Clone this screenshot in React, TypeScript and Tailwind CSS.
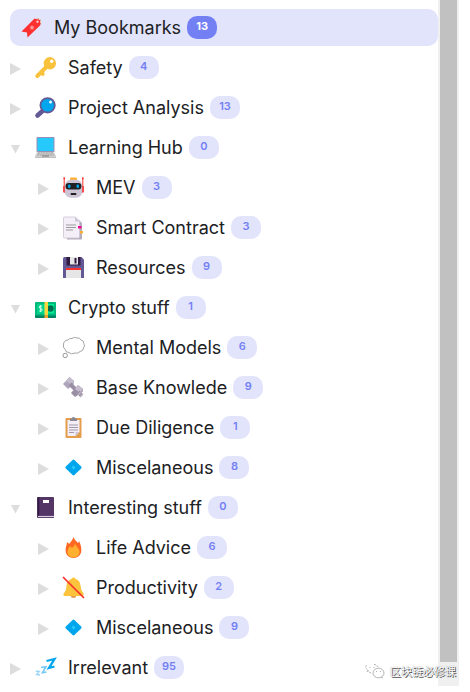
import type { ReactNode } from "react";

type IconName =
  | "bookmark" | "key" | "search" | "laptop" | "robot" | "pages" | "floppy" | "money" | "thought"
  | "bolt" | "clipboard" | "diamond" | "notebook" | "fire" | "bell" | "zzz";

const drawings: Record<IconName, ReactNode> = {
  bookmark: (
    <>
      <path d="M17 1l1 3M20 3l-3 1.500M18 5l2 2" stroke="#d99a55" strokeWidth="1" fill="none" />
      <path d="M13.500 1.500l5.500 1.500.500 5L6.500 20.500l-.500-5-5.500-1z" fill="#ff3030" />
      <circle cx="16.500" cy="4.800" r="1.200" fill="#ffc6c6" />
      <path d="M11 8l.800 1.600 1.700.200-1.200 1.200.200 1.700-1.500-.800-1.500.800.200-1.700-1.200-1.200 1.700-.200z" fill="#ff9b9b" />
    </>
  ),
  key: (
    <>
      <path d="M2.300 19l9.500-9.500M5.500 15.800l2.200 1" stroke="#f9c23c" strokeWidth="4" strokeLinecap="round" />
      <circle cx="14.800" cy="6.300" r="6.200" fill="#f9c23c" />
      <circle cx="16.700" cy="4.300" r="1.700" fill="#fff" />
    </>
  ),
  search: (
    <>
      <path d="M2.500 18.500l5-4.500" stroke="#635994" strokeWidth="4.600" strokeLinecap="round" />
      <circle cx="12.600" cy="8.300" r="7.200" fill="#00a6ed" stroke="#635994" strokeWidth="1.800" />
      <circle cx="15.500" cy="5" r="1.500" fill="#e8f7ff" />
    </>
  ),
  laptop: (
    <>
      <rect x="1.500" y="0" width="18" height="15" rx="1" fill="#998eb5" />
      <rect x="2.500" y="1" width="16" height="13" fill="#26c9fc" />
      <path d="M2 15h17l2 4v2H0v-2z" fill="#d3d3d3" />
      <path d="M3 16h15M2 18h17" stroke="#9b9b9b" strokeDasharray="2 .6" />
      <path d="M7 19h7" stroke="#858585" strokeWidth="1.200" />
      <path d="M0 20.500h21" stroke="#bebebe" />
    </>
  ),
  robot: (
    <>
      <path d="M1.200 2v14M19.800 2v14" stroke="#f8312f" strokeWidth="1" />
      <path d="M1.200 9v6M19.800 9v6" stroke="#f8312f" strokeWidth="2" />
      <circle cx="1.200" cy="1.300" r="1" fill="#f8312f" />
      <circle cx="19.800" cy="1.300" r="1" fill="#f8312f" />
      <rect x="7" y="0.500" width="7" height="3" rx="1" fill="#ffb02e" />
      <rect x="1.800" y="2.800" width="17.400" height="18" rx="6" fill="#cdc4d6" />
      <rect x="2.600" y="6" width="15.800" height="6.500" rx="3" fill="#212121" />
      <rect x="5" y="7.500" width="2.500" height="3.500" rx="1" fill="#00a6ed" />
      <rect x="13.500" y="7.500" width="2.500" height="3.500" rx="1" fill="#00a6ed" />
      <rect x="7.500" y="16" width="6" height="2" rx="1" fill="#212121" />
    </>
  ),
  pages: (
    <>
      <path d="M4 3h12l3 3v15.500q0 1-1 1H4z" fill="#b4acbc" />
      <path d="M1.500 0h11l4 4v16q0 1-1 1h-14Q.500 21 .500 20V1q0-1 1-1z" fill="#f3eef8" stroke="#cdc4d6" strokeWidth=".8" />
      <path d="M12 0v4.500h4.500z" fill="#cdc4d6" />
      <path d="M3 8h10M3 10.500h10M3 13h7" stroke="#9b9b9b" />
      <rect x="15" y="9" width="3.500" height="2.500" fill="#f70a8d" />
      <rect x="17" y="14" width="3" height="2.500" fill="#ffb02e" />
    </>
  ),
  floppy: (
    <>
      <path d="M1.500 0h17L21 2.500V21H0V1.500Q0 0 1.500 0z" fill="#635994" />
      <rect x="3.500" y="0" width="14" height="8.500" fill="#321b41" />
      <rect x="7" y="0" width="8" height="7.500" fill="#e6e6e6" />
      <rect x="11.500" y="1" width="2" height="5.500" fill="#321b41" />
      <rect x="3" y="11" width="15" height="10" fill="#e6e6e6" />
      <rect x="3" y="11" width="15" height="2" fill="#f8312f" />
    </>
  ),
  money: (
    <>
      <rect x="0" y="7" width="21" height="14" rx=".8" fill="#008463" />
      <rect x="0" y="5" width="21" height="13.500" rx=".8" fill="#00b87c" />
      <rect x="2" y="7" width="17" height="9.500" fill="#00f092" />
      <circle cx="15.500" cy="11.500" r="3.200" fill="#006d50" />
      <rect x="2" y="7" width="7" height="9.500" fill="#00d28b" />
      <rect x="9.500" y="5" width="3.500" height="13.500" fill="#fcd53f" />
      <rect x="9.500" y="18.500" width="3.500" height="2.500" fill="#ff9d2d" />
      <path d="M7.200 9.200q-3-.8-3 .8t1.500 1.500 1.500 1.500-3 1M5.700 8v7" stroke="#e4fff0" strokeWidth=".9" fill="none" />
    </>
  ),
  thought: (
    <>
      <path d="M5 3q1-2 4-1.500Q11-.500 14 1q3-.500 4 2 3 .500 2.800 3.500Q22.500 9 20.500 11q0 3-3.500 3.500-2 2.500-5 1.500Q8 18 6 15.500q-3.500.200-3.800-3.200Q-.500 10.500.500 8 .300 3.500 5 3z" fill="#fff" stroke="#9b9b9b" strokeWidth=".9" />
      <circle cx="2.200" cy="18.500" r="2.200" fill="#fff" stroke="#8b8b8b" strokeWidth=".9" />
    </>
  ),
  bolt: (
    <>
      <path d="M0 7l6.500-7 4.500 4-.500 3.500L5 12z" fill="#afa6bd" />
      <path d="M3 4l3.500-4 4.500 4-3 3z" fill="#c5bdce" />
      <path d="M7 7l5 5" stroke="#998ea4" strokeWidth="4" />
      <path d="M8 16l7-8 5 4-.500 3-7.500 5z" fill="#998ea4" />
      <path d="M12 12l3-4 5 4-3 4z" fill="#c5bdce" />
      <path d="M15 15l4 4" stroke="#b4acbc" strokeWidth="4" />
      <path d="M14 17l3-3M16 19l3-3" stroke="#87798f" strokeWidth=".7" />
    </>
  ),
  clipboard: (
    <>
      <rect x="2.500" y="1" width="16" height="20" rx="1" fill="#e39d4d" />
      <path d="M4.500 3h12v12l-4 4h-8z" fill="#f3eef8" />
      <path d="M12.500 19v-4h4z" fill="#cdc4d6" />
      <path d="M7 4V2.500q0-1 1.500-1Q8.500 0 10.500 0t2 1.500q1.500 0 1.500 1V4z" fill="#8b8794" />
      <path d="M6 8h9M6 10.500h9M6 13h9M6 15.500h5" stroke="#998ea4" strokeWidth=".9" />
    </>
  ),
  diamond: (
    <>
      <path d="M9.600 3q.9-.9 1.800 0l6.800 6.600q.9.900 0 1.800L11.400 18q-.9.900-1.800 0l-6.800-6.600q-.9-.9 0-1.800z" fill="#00a6ed" />
      <path d="M10.500 8.500l2 2-2 2-2-2z" fill="#26c9fc" />
    </>
  ),
  notebook: (
    <>
      <path d="M3 0h15q1 0 1 1v20H3q-1 0-1-1V1q0-1 1-1z" fill="#533566" />
      <path d="M3.500 0v19" stroke="#321b41" strokeWidth="1.500" />
      <path d="M3 19.500h16" stroke="#d8d0e0" strokeWidth="1.200" />
      <rect x="8" y="3" width="6" height="3" fill="#fff" />
    </>
  ),
  fire: (
    <>
      <path d="M10.500 0c1 3 3 4 4.500 6 .8-.8 1-1.600 1-2 2 4 2.500 7 2.300 10-.3 4-3.500 7-7.800 7s-7.800-3-7.900-7.500C2.500 10 4 8 4 5c1 .5 1.600 1.200 2 2C7.500 5 9.800 3 10.500 0z" fill="#ff6723" />
      <path d="M12 6c0 3 4.500 5 4.500 9 0 3-2.400 5.300-6 5.300s-6-2.300-6-5.300c0-3 1.500-4 2.500-6l2 2c2-1.500 2.500-3 3-5z" fill="#ffb02e" />
    </>
  ),
  bell: (
    <>
      <ellipse cx="10.500" cy="19" rx="2.700" ry="2" fill="#e39d4d" />
      <path d="M8.500 2q0-1.500 2-1.500t2 1.500q4.500 1 5 6.500.300 5 3 8 .700 2.500-1 2.500h-18q-1.500 0-1-2.500 3-3 3-8 .500-5.500 5-6.500z" fill="#fcc33c" />
      <path d="M.500.500l20 20" stroke="#f8312f" strokeWidth="1.700" strokeLinecap="round" />
    </>
  ),
  zzz: (
    <g fill="none">
      <path d="M11.500 4l8-2-5.500 9 5.500-1.500" stroke="#00a6ed" strokeWidth="2.300" />
      <path d="M6 10.500l5-.8-3.500 6 4-.7" stroke="#74c8f5" strokeWidth="1.600" />
      <path d="M.800 14l3.500.500L1.500 17.500l3.500.500" stroke="#9bd6f8" strokeWidth="1.300" />
    </g>
  ),
};

interface Folder {
  name: string;
  count: number;
  icon: IconName;
  children?: Folder[];
}

const folders: Folder[] = [
  { name: "Safety", count: 4, icon: "key" },
  { name: "Project Analysis", count: 13, icon: "search" },
  {
    name: "Learning Hub", count: 0, icon: "laptop",
    children: [
      { name: "MEV", count: 3, icon: "robot" },
      { name: "Smart Contract", count: 3, icon: "pages" },
      { name: "Resources", count: 9, icon: "floppy" },
    ],
  },
  {
    name: "Crypto stuff", count: 1, icon: "money",
    children: [
      { name: "Mental Models", count: 6, icon: "thought" },
      { name: "Base Knowlede", count: 9, icon: "bolt" },
      { name: "Due Diligence", count: 1, icon: "clipboard" },
      { name: "Miscelaneous", count: 8, icon: "diamond" },
    ],
  },
  {
    name: "Interesting stuff", count: 0, icon: "notebook",
    children: [
      { name: "Life Advice", count: 6, icon: "fire" },
      { name: "Productivity", count: 2, icon: "bell" },
      { name: "Miscelaneous", count: 9, icon: "diamond" },
    ],
  },
  { name: "Irrelevant", count: 95, icon: "zzz" },
];

function Icon({ name }: { name: IconName }) {
  return (
    <svg viewBox="0 0 21 21" className="mr-3 size-[21px] shrink-0 overflow-visible" aria-hidden="true">
      {drawings[name]}
    </svg>
  );
}

function Badge({ count, selected = false }: { count: number; selected?: boolean }) {
  return (
    <span
      className={`ml-1.5 flex h-[23px] w-[30px] justify-center rounded-[10px] text-[11px] leading-5 ${
        selected ? "bg-[#7380f4] font-bold text-white" : "bg-[#e2e4fb] font-semibold text-[#7380f4]"
      }`}
    >
      {count}
    </span>
  );
}

function FolderRow({ folder, nested = false }: { folder: Folder; nested?: boolean }) {
  const open = Boolean(folder.children);
  return (
    <li className="flex flex-col gap-[3px]">
      <div className={`flex h-[37px] items-center ${nested ? "pl-7" : ""}`}>
        <button type="button" aria-label={`Toggle ${folder.name}`} aria-expanded={open} className="w-[25px] shrink-0">
          <svg viewBox="0 0 12 14" className="mt-0.5 h-[14px] w-3 fill-[#dddddd]" aria-hidden="true">
            <path d={open ? "M1 3h9L5.500 11.500z" : "M0 1l11 6L0 13z"} />
          </svg>
        </button>
        <button type="button" className="flex items-center whitespace-nowrap">
          <Icon name={folder.icon} />
          {folder.name}
          <Badge count={folder.count} />
        </button>
      </div>
      {folder.children && (
        <ul className="flex flex-col gap-[3px]">
          {folder.children.map((child) => (
            <FolderRow key={child.name} folder={child} nested />
          ))}
        </ul>
      )}
    </li>
  );
}

export default function App() {
  return (
    <div className="relative mr-[11px] flex bg-white font-['Inter',sans-serif] text-lg text-[#202124]">
      <nav aria-label="Bookmarks" className="min-w-0 flex-1 pt-[9px] pl-[10px]">
        <button type="button" aria-current="page" className="mb-[3px] flex h-[37px] w-full items-center rounded-[10px] bg-[#e2e4fb] pl-[11px]">
          <Icon name="bookmark" />
          My Bookmarks
          <Badge count={13} selected />
        </button>
        <ul className="flex flex-col gap-[3px]">
          {folders.map((folder) => (
            <FolderRow key={folder.name} folder={folder} />
          ))}
        </ul>
      </nav>
      <div className="flex w-[21px] shrink-0 bg-[#f0f0f0] px-[2px] pb-6">
        <div className="flex-1 bg-[#c1c1c1]" />
      </div>
      <div className="absolute right-[3px] bottom-[7px] flex items-center gap-[5px]">
        <svg viewBox="0 0 20 16" className="h-4 w-5" fill="#fff" stroke="#aaa" strokeWidth=".9" aria-hidden="true">
          <path d="M2 9l1-2Q-1 4 2 1.500M6 10Q3 9 3 7M9 1.500q3 0 4 2.500" strokeDasharray="2 1" fill="none" />
          <ellipse cx="13.500" cy="10" rx="5.500" ry="4.800" />
          <path d="M11.500 8v1M15.500 8v1M5 4v1M9 4v1M16 14l2 1" />
        </svg>
        <span className="font-['Noto_Sans_CJK_SC',sans-serif] text-[11px] leading-4 text-white [text-shadow:1px_1px_0_#555,0_0_1px_#777]">区块链必修课</span>
      </div>
    </div>
  );
}
